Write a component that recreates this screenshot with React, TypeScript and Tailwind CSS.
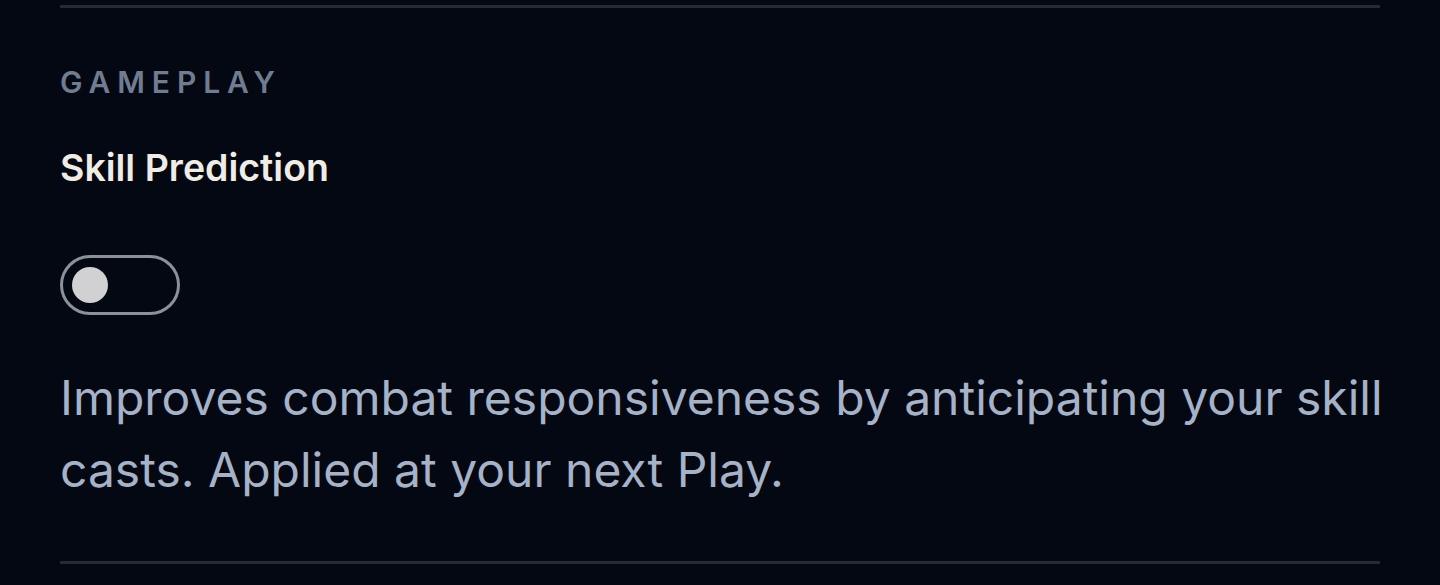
import React from "react";

export default function App() {
  return (
    <div className="min-h-[585px] w-full bg-[#040812] px-[60px] pt-[5px]" style={{ fontFamily: "Inter, 'Noto Sans', sans-serif" }}>
      <section className="border-t-[3px] border-b-[3px] border-[#262a35] pt-[52px] pb-[55px]">
        <h2 className="text-[30px] leading-[45px] font-semibold tracking-[0.23em] text-[#707d90] uppercase">Gameplay</h2>
        <h3 className="mt-[36px] text-[37.5px] leading-[54px] font-semibold text-[#f0ece4]">Skill Prediction</h3>
        <div className="mt-[60px]">
          <button
            type="button"
            role="switch"
            aria-checked="false"
            className="flex h-[60px] w-[120px] items-center rounded-full border-[3px] border-[#8b9099] bg-transparent pl-[9px]"
          >
            <span className="block h-[36px] w-[36px] rounded-full bg-[#d1d1d4]" />
          </button>
        </div>
        <p className="mt-[47px] mr-[-12px] text-[48px] leading-[72px] text-[#a6b2c6]">
          Improves combat responsiveness by anticipating your skill casts. Applied at your next Play.
        </p>
      </section>
    </div>
  );
}
